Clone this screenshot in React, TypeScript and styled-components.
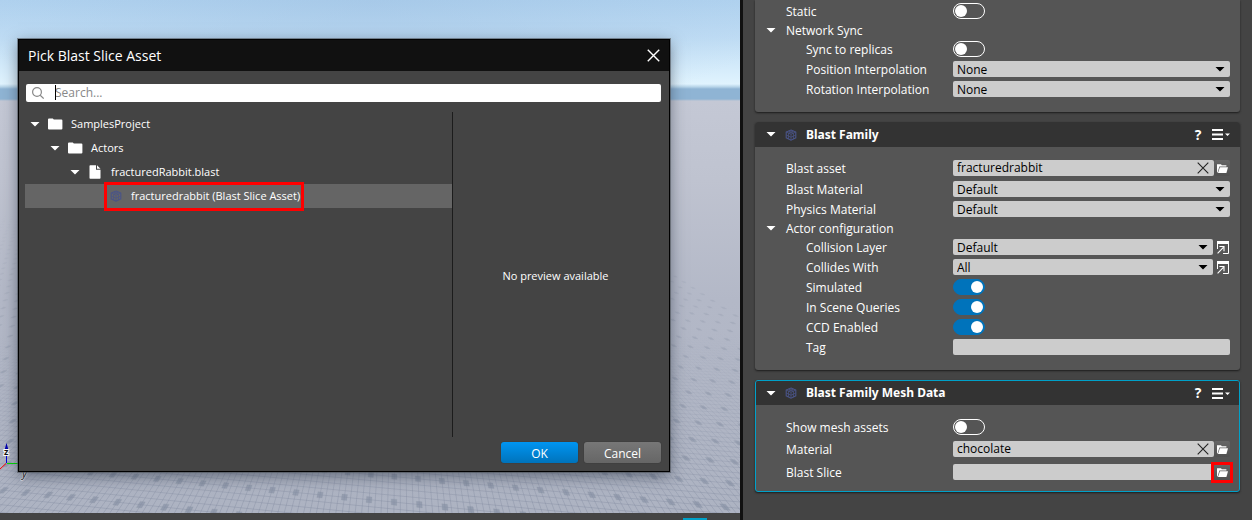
import React, { useId } from "react";
import styled, { createGlobalStyle, css } from "styled-components";

const GlobalStyle = createGlobalStyle`
  *, *::before, *::after { box-sizing: border-box; }
  body { margin: 0; background: #444; }
  body, button, input, select {
    font-family: "Open Sans", "Noto Sans", sans-serif;
    font-size: 12px;
    line-height: 16px;
  }
  button, input, select { margin: 0; padding: 0; border: 0; }
`;

/* ---------- page ---------- */

const Page = styled.div`
  display: grid;
  grid-template-columns: minmax(0, 1fr) 512px;
  min-height: 100vh;
  color: #fff;
`;

const Stage = styled.main`
  display: flex;
  flex-direction: column;
`;

const Viewport = styled.div`
  position: relative;
  flex: 1;
  padding: 39px 70px 41px 18px;
  overflow: hidden;
  background:
    radial-gradient(ellipse 420px 130px at 50% 0, rgba(150, 185, 220, 0.35), rgba(150, 185, 220, 0)),
    linear-gradient(#b0d2ef 0, #bfdcf4 38px, #e0f3fe 84px, #b5d3e8 87px, #8fb4d4 89px, #8fb4d4 99px, #c4c8d5 101px, #bfc3d0 180px, #b3b8c7 300px, #adb3c2 100%);
`;

const Ground = styled.svg`
  position: absolute;
  inset: 0;
  width: 100%;
  height: 100%;
`;

const StatusBar = styled.footer`
  display: flex;
  justify-content: flex-end;
  align-items: flex-end;
  height: 7px;
  padding-right: 33px;
  background: #444;
`;

const StatusMark = styled.span`
  width: 24px;
  height: 2px;
  background: #00a1c9;
`;

/* ---------- dialog ---------- */

const Dialog = styled.section`
  position: relative;
  display: flex;
  flex-direction: column;
  height: 100%;
  background: #444;
  border: 1px solid #000;
  box-shadow: 0 0 0 1px rgba(80, 85, 92, 0.6), 0 4px 14px rgba(20, 30, 45, 0.5);
`;

const TitleBar = styled.header`
  display: flex;
  align-items: center;
  justify-content: space-between;
  height: 31px;
  padding: 0 9px;
  background: #111;
`;

const Title = styled.h1`
  margin: 0;
  font-size: 14px;
  font-weight: 400;
  line-height: 20px;
`;

const IconButton = styled.button`
  display: grid;
  place-items: center;
  flex: none;
  color: inherit;
  background: none;
`;

const SearchBox = styled.label`
  position: relative;
  display: flex;
  align-items: center;
  gap: 11px;
  height: 18px;
  margin: 13px 8px 10px 7px;
  padding: 0 6px;
  background: #fff;
  border-radius: 2px;
  color: #888;
`;

const SearchInput = styled.input`
  flex: 1;
  min-width: 0;
  background: none;
  outline: none;
  color: #222;
  &::placeholder { color: #888; opacity: 1; }
`;

const Caret = styled.span`
  position: absolute;
  left: 29px;
  top: 1px;
  width: 1px;
  height: 15px;
  background: #000;
`;

const Panes = styled.div`
  display: grid;
  grid-template-columns: minmax(0, 37fr) minmax(0, 18fr);
  flex: 1;
  min-height: 325px;
  padding: 0 8px 0 6px;
`;

const Tree = styled.ul`
  margin: 0;
  padding: 0;
  list-style: none;
  font-size: 11px;
  border-right: 1px solid #1c1c1c;
`;

const TreeItem = styled.li<{ $level: number; $selected?: boolean }>`
  display: grid;
  grid-template-columns: 10px 15px auto;
  column-gap: 8px;
  align-items: center;
  justify-content: start;
  height: 24px;
  padding-left: ${(p) => p.$level * 20 + 5}px;
  background: ${(p) => (p.$selected ? "#656565" : "transparent")};
  white-space: nowrap;
  svg { justify-self: center; }
`;

const SelectedEntry = styled.div`
  position: relative;
  grid-column: 2 / 4;
  display: grid;
  grid-template-columns: 15px auto;
  column-gap: 8px;
  align-items: center;
`;

const EntryMark = styled.span`
  position: absolute;
  inset: -6px -4px -7px -4px;
  border: 3px solid #f00;
  pointer-events: none;
`;

const Preview = styled.p`
  margin: 0;
  padding: 2px 3px 0 0;
  align-self: center;
  font-size: 11px;
  text-align: center;
`;

const Actions = styled.div`
  display: flex;
  justify-content: flex-end;
  gap: 6px;
  padding: 5px 8px 8px;
`;

const ActionButton = styled.button<{ $primary?: boolean }>`
  width: 77px;
  height: 21px;
  padding-top: 2px;
  border-radius: 3px;
  color: #fff;
  background: ${(p) => (p.$primary ? "linear-gradient(#0095f2, #0073bb)" : "linear-gradient(#777, #666)")};
  box-shadow: 0 0 1px #222;
`;

/* ---------- inspector ---------- */

const Inspector = styled.aside`
  display: flex;
  flex-direction: column;
  gap: 10px;
  padding: 0 12px;
  background: #444;
  border-left: 3px solid #111;
`;

const Card = styled.section<{ $active?: boolean; $cut?: boolean }>`
  background: #555;
  border-radius: ${(p) => (p.$cut ? "0 0 3px 3px" : "3px")};
  box-shadow: 0 1px 2px #1c1c1c;
  overflow: hidden;
  ${(p) =>
    p.$active &&
    css`
      border: 1px solid #00a1c9;
      > header { height: 24px; padding: 0 9px; }
      > div { margin: 0 -1px; }
    `}
`;

const CardHeader = styled.header`
  display: flex;
  align-items: center;
  height: 25px;
  padding: 0 10px;
  background: #333;
`;

const CardTitle = styled.h2`
  flex: 1;
  margin: 0 0 0 9px;
  font-family: "Noto Sans", "Open Sans", sans-serif;
  font-size: 12px;
  font-weight: 700;
  line-height: 16px;
`;

const HeaderLead = styled.span`
  display: grid;
  grid-template-columns: 12px 12px;
  column-gap: 8px;
  place-items: center;
  width: 32px;
`;

const HeaderButtons = styled.div`
  display: flex;
  gap: 9px;
`;

const HelpButton = styled(IconButton)`
  width: 10px;
  font-size: 14px;
  font-weight: 700;
`;

const CardBody = styled.div<{ $top: number; $bottom: number }>`
  padding: ${(p) => p.$top}px 10px ${(p) => p.$bottom}px 0;
`;

const Row = styled.div<{ $asset?: boolean }>`
  display: grid;
  grid-template-columns: 198px minmax(0, 1fr);
  padding: ${(p) => (p.$asset ? "4px 0 3px" : "2px 0")};
`;

const Label = styled.label<{ $nested?: boolean }>`
  height: 16px;
  padding-left: ${(p) => (p.$nested ? 51 : 31)}px;
  line-height: 18px;
  white-space: nowrap;
`;

const GroupRow = styled.div`
  display: flex;
  align-items: center;
  height: 18px;
  padding-left: 10px;
  gap: 9px;
  line-height: 18px;
  svg { width: 12px; }
  span { padding-top: 2px; }
`;

const Control = styled.div`
  display: flex;
  position: relative;
  height: 16px;
`;

const SelectWrap = styled.span`
  position: relative;
  flex: 1;
  color: #000;
  svg { position: absolute; right: 5px; top: 6px; pointer-events: none; }
`;

const Select = styled.select`
  display: block;
  appearance: none;
  width: 100%;
  height: 16px;
  padding: 1px 4px 0;
  color: #000;
  background: #ccc;
  border-radius: 2px;
`;

const Field = styled.span`
  display: flex;
  align-items: center;
  flex: 1;
  min-width: 0;
  height: 16px;
  padding: 0 5px 0 4px;
  color: #222;
  background: #ccc;
  border-radius: 2px;
`;

const TextInput = styled.input`
  flex: 1;
  min-width: 0;
  height: 16px;
  color: #000;
  background: none;
  outline: none;
`;

const BrowseButton = styled(IconButton)`
  width: 16px;
  height: 16px;
  color: #fff;
  background: linear-gradient(#666, #505050);
  border-radius: 2px;
`;

const BrowseMark = styled.span`
  position: absolute;
  top: -2px;
  right: -3px;
  width: 22px;
  height: 21px;
  border: 3px solid #f00;
  pointer-events: none;
`;

const OpenButton = styled(IconButton)`
  width: 12px;
  height: 16px;
  margin: 0 1px 0 4px;
  color: #fff;
`;

const Switch = styled.input`
  appearance: none;
  width: 32px;
  height: 16px;
  padding: 1px;
  border: 1px solid #fff;
  border-radius: 8px;
  &::before {
    content: "";
    display: block;
    width: 12px;
    height: 12px;
    border-radius: 6px;
    background: #fff;
  }
  &:checked {
    background: #0073bb;
    border-color: #0073bb;
  }
  &:checked::before { margin-left: 16px; }
`;

/* ---------- icons ---------- */

const DownIcon = () => (
  <svg width="10" height="5" viewBox="0 0 10 5" fill="currentColor" aria-hidden="true">
    <path d="M0.5 0H9.5L8 1.4L5 4.6L2 1.4Z" />
  </svg>
);

const CrossIcon = ({ size = 12, weight = 1.1 }: { size?: number; weight?: number }) => (
  <svg width={size} height={size} viewBox="0 0 12 12" fill="none" stroke="currentColor" strokeWidth={weight} aria-hidden="true">
    <path d="M0.7 0.7L11.3 11.3M11.3 0.7L0.7 11.3" />
  </svg>
);

const SearchIcon = () => (
  <svg width="12" height="12" viewBox="0 0 12 12" fill="none" stroke="currentColor" strokeWidth="1.2" aria-hidden="true">
    <circle cx="5" cy="5" r="4.4" />
    <path d="M8.2 8.2L11.7 11.6" />
  </svg>
);

const FolderIcon = () => (
  <svg width="15" height="12" viewBox="0 0 15 12" fill="#fff" aria-hidden="true">
    <path d="M0 1.4Q0 0.4 1 0.4H4.8L5.8 1.6H13.4Q14.4 1.6 14.4 2.6V10.6Q14.4 11.6 13.4 11.6H1Q0 11.6 0 10.6Z" />
  </svg>
);

const FileIcon = () => (
  <svg width="13" height="14" viewBox="0 0 13 14" fill="#fff" aria-hidden="true">
    <path d="M0.5 1Q0.5 0.3 1.2 0.3H7V4.8H11.5V13Q11.5 13.7 10.8 13.7H1.2Q0.5 13.7 0.5 13Z" />
    <path d="M8 0.3L11.5 3.8H8Z" />
  </svg>
);

const CubeIcon = () => (
  <svg width="12" height="12" viewBox="0 0 12 12" fill="none" stroke="#4a5488" strokeWidth="1.1" aria-hidden="true">
    <path d="M6 1L10.8 3V8.8L6 11.2L1.2 8.8V3Z" />
    <path d="M1.2 3L6 5.2L10.8 3M6 5.2V11.2M3.6 2L8.4 4.2V10M8.4 2L3.6 4.2V10M1.2 6L6 8.2L10.8 6" strokeWidth="0.8" />
  </svg>
);

const OpenFolderIcon = () => (
  <svg width="11" height="9" viewBox="0 0 11 9" fill="currentColor" aria-hidden="true">
    <path d="M0 8.4V0.3H4L4.8 1.3H9.4V2.6H2.4L0.6 8.4Z" />
    <path d="M2.9 3.2H11L9.4 9H1Z" />
  </svg>
);

const OpenInIcon = () => (
  <svg width="12" height="13" viewBox="0 0 12 13" fill="none" stroke="currentColor" aria-hidden="true">
    <path d="M0.5 8V2M11.5 2V12.5H6" />
    <path d="M0 1.5H12" strokeWidth="3" />
    <path d="M0.6 12.4L6.4 6.4M2.4 5.5H7V10.2" strokeWidth="1.1" />
  </svg>
);

const MenuIcon = () => (
  <svg width="18" height="11" viewBox="0 0 18 11" fill="currentColor" aria-hidden="true">
    <path d="M0 0H11V2H0ZM0 4.5H11V6.5H0ZM0 9H11V11H0ZM13 4.5H18L15.5 7Z" />
  </svg>
);

/* ---------- ground plane ---------- */

const HORIZON = 97;

// Perspective projection of a lattice coordinate onto the viewport.
const project = (i: number, j: number): [number, number] => {
  const w = 2.439 - 0.015 * i + 0.1655 * j;
  return [(1768 + 56.1 * i + 66 * j) / w, HORIZON + 1000 / w];
};

const toPath = (pts: [number, number][]) => "M" + pts.map(([x, y]) => `${x.toFixed(1)} ${y.toFixed(1)}`).join("L");

const dots: string[] = [];
for (let j = -4; j <= 30; j++) {
  for (let i = -80; i <= 12; i++) {
    const [x, y] = project(i, j);
    if (x < -20 || x > 1400 || y < 210 || y > 720) continue;
    const r = 0.11;
    dots.push(toPath([project(i - r, j - r), project(i + r, j - r), project(i + r, j + r), project(i - r, j + r)]) + "Z");
  }
}

const lines: string[] = [];
for (let n = -20; n <= 60; n++) lines.push(toPath([project(-80, n / 4), project(20, n / 4)]));
for (let n = -320; n <= 80; n++) lines.push(toPath([project(n / 4, -4), project(n / 4, 16)]));

const GroundPlane = () => (
  <Ground aria-hidden="true">
    <defs>
      <linearGradient id="fade" gradientUnits="userSpaceOnUse" x1="0" y1="210" x2="0" y2="513">
        <stop offset="0" stopColor="#fff" stopOpacity="0" />
        <stop offset="0.4" stopColor="#fff" stopOpacity="0.4" />
        <stop offset="1" stopColor="#fff" stopOpacity="0.9" />
      </linearGradient>
      <linearGradient id="fadeLines" gradientUnits="userSpaceOnUse" x1="0" y1="330" x2="0" y2="513">
        <stop offset="0" stopColor="#8089a0" stopOpacity="0" />
        <stop offset="1" stopColor="#7c859b" stopOpacity="0.5" />
      </linearGradient>
      <mask id="far" maskUnits="userSpaceOnUse" x="0" y="0" width="3000" height="3000">
        <rect width="3000" height="3000" fill="url(#fade)" />
      </mask>
    </defs>
    <path d={lines.join("")} fill="none" stroke="url(#fadeLines)" strokeWidth="0.7" />
    <path d={dots.join("")} fill="#858fa2" stroke="#858fa2" strokeOpacity="0.2" fillOpacity="0.7" mask="url(#far)" />
    <path d="M6.5 463V446" stroke="#0000d8" strokeWidth="1" />
    <path d="M4.5 450L6.5 443L8.5 450Z" fill="#0000b0" />
    <path d="M7 463.5H22" stroke="#00e000" />
    <path d="M6 463.5L0 469" stroke="#f00" />
    <text x="4" y="455" fontSize="9" fontWeight="700" fill="#111" stroke="#fff" strokeWidth="2" paintOrder="stroke">z</text>
    <text x="22" y="477" fontSize="11" fontStyle="italic" fill="#111" stroke="#fff" strokeWidth="1" paintOrder="stroke">y</text>
  </Ground>
);

/* ---------- property rows ---------- */

type RowProps = { label: string; nested?: boolean };

const SwitchRow = ({ label, nested, on }: RowProps & { on?: boolean }) => {
  const id = useId();
  return (
    <Row>
      <Label htmlFor={id} $nested={nested}>{label}</Label>
      <Control><Switch id={id} type="checkbox" defaultChecked={on} /></Control>
    </Row>
  );
};

const SelectRow = ({ label, nested, value, open }: RowProps & { value: string; open?: boolean }) => {
  const id = useId();
  return (
    <Row>
      <Label htmlFor={id} $nested={nested}>{label}</Label>
      <Control>
        <SelectWrap>
          <Select id={id} defaultValue={value}><option>{value}</option></Select>
          <DownIcon />
        </SelectWrap>
        {open && <OpenButton type="button" aria-label={`Edit ${label}`}><OpenInIcon /></OpenButton>}
      </Control>
    </Row>
  );
};

const AssetRow = ({ label, value, marked }: RowProps & { value?: string; marked?: boolean }) => {
  const id = useId();
  return (
    <Row $asset>
      <Label htmlFor={id}>{label}</Label>
      <Control>
        <Field>
          <TextInput id={id} defaultValue={value} />
          {value && <IconButton type="button" aria-label={`Clear ${label}`}><CrossIcon /></IconButton>}
        </Field>
        <BrowseButton type="button" aria-label={`Browse ${label}`}><OpenFolderIcon /></BrowseButton>
        {marked && <BrowseMark />}
      </Control>
    </Row>
  );
};

const TextRow = ({ label, nested }: RowProps) => {
  const id = useId();
  return (
    <Row>
      <Label htmlFor={id} $nested={nested}>{label}</Label>
      <Control><Field><TextInput id={id} /></Field></Control>
    </Row>
  );
};

const Group = ({ label }: { label: string }) => <GroupRow><DownIcon /><span>{label}</span></GroupRow>;

const Header = ({ title }: { title: string }) => (
  <CardHeader>
    <HeaderLead><DownIcon /><CubeIcon /></HeaderLead>
    <CardTitle>{title}</CardTitle>
    <HeaderButtons>
      <HelpButton type="button" aria-label="Help">?</HelpButton>
      <IconButton type="button" aria-label="Menu"><MenuIcon /></IconButton>
    </HeaderButtons>
  </CardHeader>
);

export default function App() {
  return (
    <>
      <GlobalStyle />
      <Page>
        <Stage>
          <Viewport>
            <GroundPlane />
            <Dialog role="dialog" aria-labelledby="dialog-title">
              <TitleBar>
                <Title id="dialog-title">Pick Blast Slice Asset</Title>
                <IconButton type="button" aria-label="Close"><CrossIcon size={13} weight={1.3} /></IconButton>
              </TitleBar>
              <SearchBox>
                <SearchIcon />
                <SearchInput type="text" placeholder="Search..." aria-label="Search" />
                <Caret />
              </SearchBox>
              <Panes>
                <Tree>
                  <TreeItem $level={0}><DownIcon /><FolderIcon /><span>SamplesProject</span></TreeItem>
                  <TreeItem $level={1}><DownIcon /><FolderIcon /><span>Actors</span></TreeItem>
                  <TreeItem $level={2}><DownIcon /><FileIcon /><span>fracturedRabbit.blast</span></TreeItem>
                  <TreeItem $level={3} $selected>
                    <SelectedEntry>
                      <CubeIcon />
                      <span>fracturedrabbit (Blast Slice Asset)</span>
                      <EntryMark />
                    </SelectedEntry>
                  </TreeItem>
                </Tree>
                <Preview>No preview available</Preview>
              </Panes>
              <Actions>
                <ActionButton type="button" $primary>OK</ActionButton>
                <ActionButton type="button">Cancel</ActionButton>
              </Actions>
            </Dialog>
          </Viewport>
          <StatusBar><StatusMark /></StatusBar>
        </Stage>
        <Inspector>
          <Card $cut>
            <CardBody $top={1} $bottom={13}>
              <SwitchRow label="Static" />
              <Group label="Network Sync" />
              <SwitchRow label="Sync to replicas" nested />
              <SelectRow label="Position Interpolation" nested value="None" />
              <SelectRow label="Rotation Interpolation" nested value="None" />
            </CardBody>
          </Card>
          <Card>
            <Header title="Blast Family" />
            <CardBody $top={9} $bottom={13}>
              <AssetRow label="Blast asset" value="fracturedrabbit" />
              <SelectRow label="Blast Material" value="Default" />
              <SelectRow label="Physics Material" value="Default" />
              <Group label="Actor configuration" />
              <SelectRow label="Collision Layer" nested value="Default" open />
              <SelectRow label="Collides With" nested value="All" open />
              <SwitchRow label="Simulated" nested on />
              <SwitchRow label="In Scene Queries" nested on />
              <SwitchRow label="CCD Enabled" nested on />
              <TextRow label="Tag" nested />
            </CardBody>
          </Card>
          <Card $active>
            <Header title="Blast Family Mesh Data" />
            <CardBody $top={12} $bottom={8}>
              <SwitchRow label="Show mesh assets" />
              <AssetRow label="Material" value="chocolate" />
              <AssetRow label="Blast Slice" marked />
            </CardBody>
          </Card>
        </Inspector>
      </Page>
    </>
  );
}
